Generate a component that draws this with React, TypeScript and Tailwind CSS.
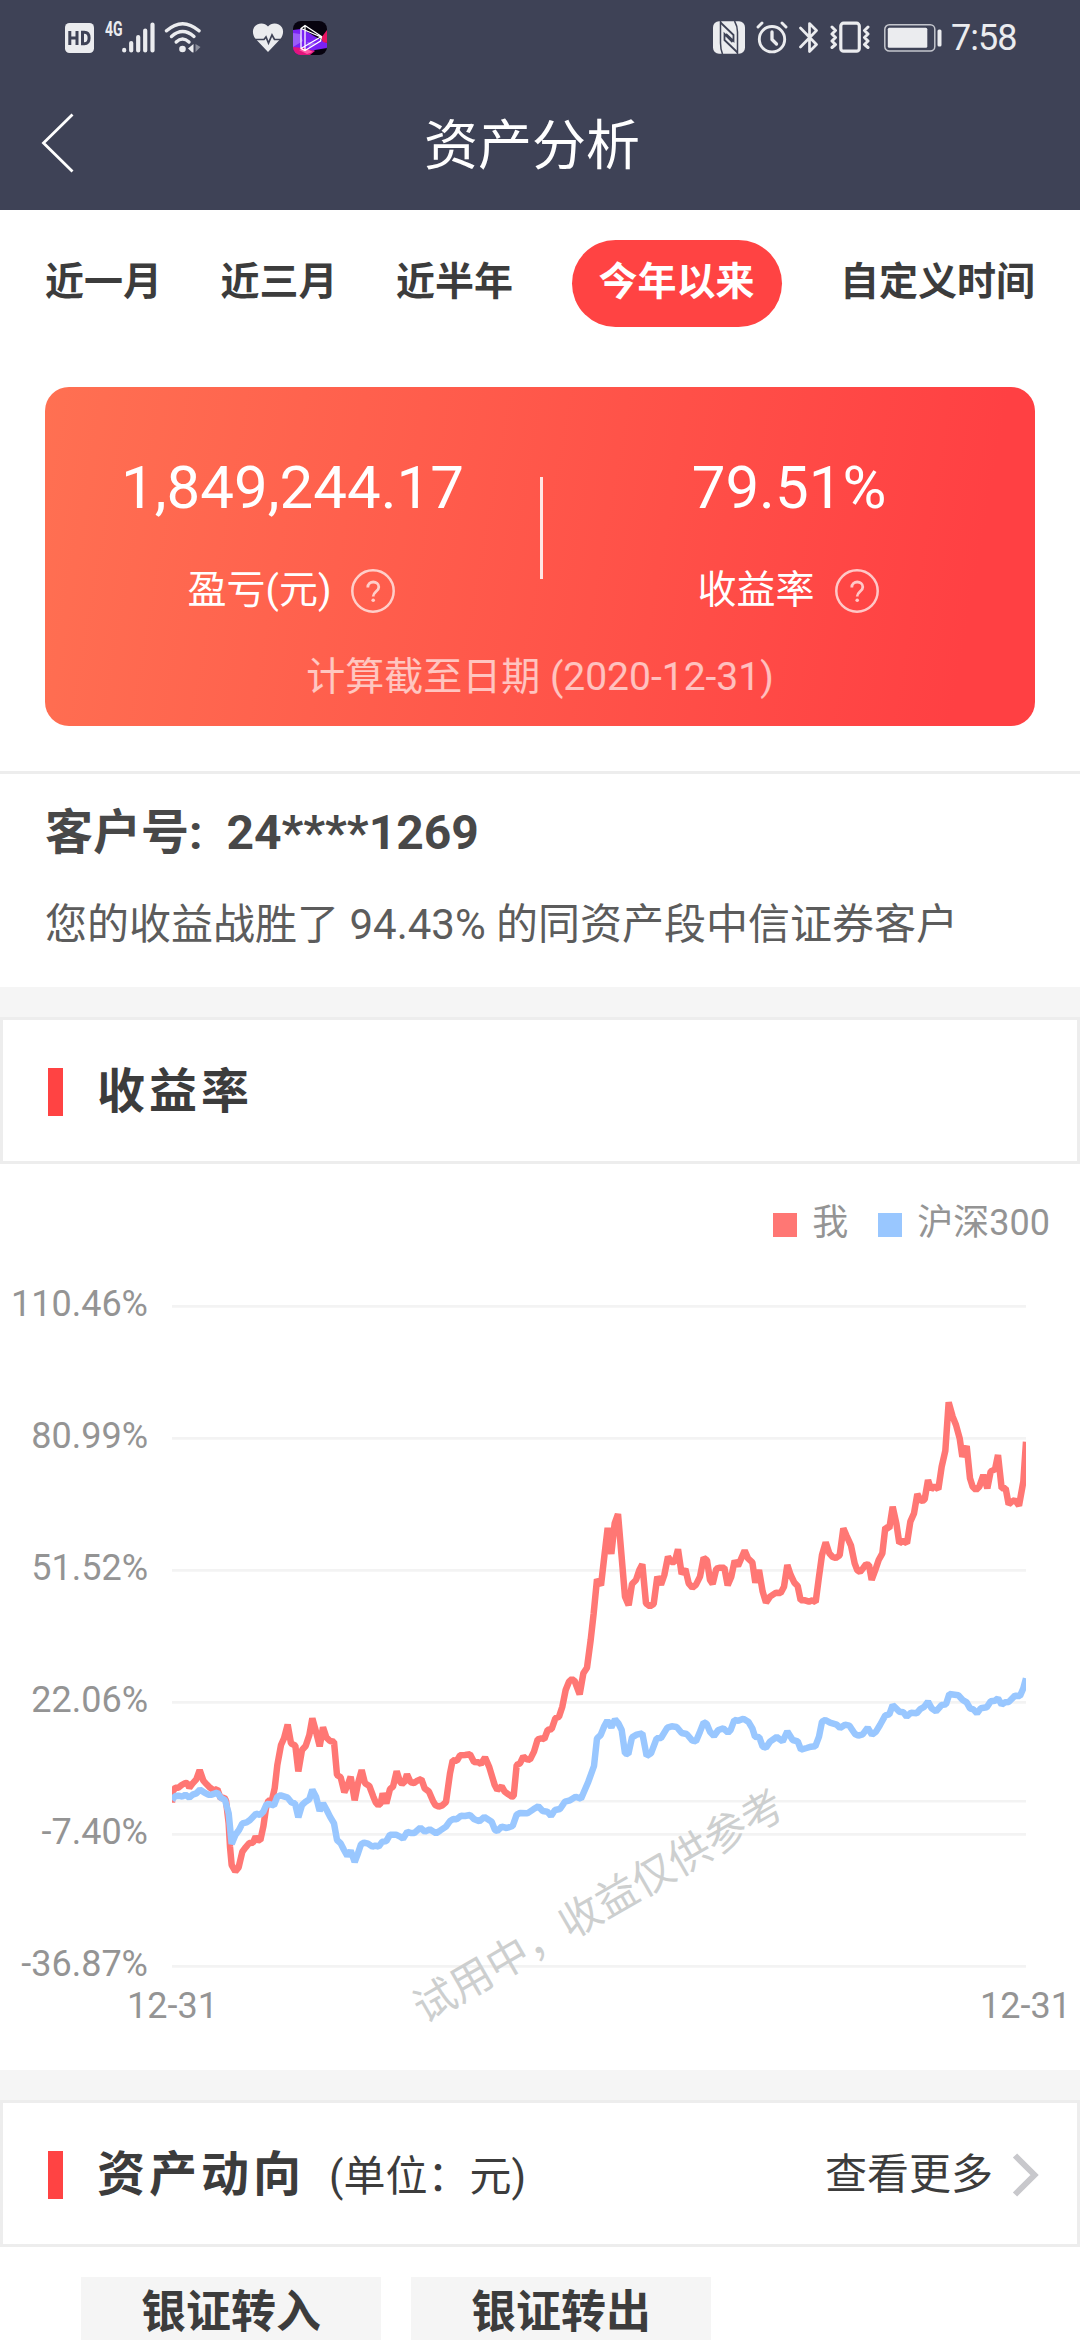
import React from "react";

const ink = "#ebecef";

function StatusLeft() {
  return (
    <div className="flex items-start">
      <svg width="29" height="30" viewBox="0 0 29 30" className="mt-[23px]">
        <rect width="29" height="30" rx="4.5" fill={ink} />
        <path d="M4.800 8v14M12 8v14M4.800 15h7M17.500 9.300v11.400h1.800c3 0 4.800-1.900 4.800-5.700s-1.800-5.700-4.800-5.700z" fill="none" stroke="#3e4256" strokeWidth="3" />
      </svg>
      <span className="ml-[11px] mt-[19px] h-[20px] w-[17px] origin-left scale-x-[0.7] text-[20px] leading-[20px] font-bold text-[#ebecef]">4G</span>
      <svg width="33" height="32" viewBox="0 0 33 32" className="mt-[21.500px]">
        <g stroke={ink} strokeWidth="4.2" strokeLinecap="round">
          <path d="M2.200 27.900v.6M9.200 21v7.500M16.200 15v13.500M23.200 8.500v20M30.500 2.500v26" />
        </g>
      </svg>
      <svg width="40" height="33" viewBox="0 0 40 33" className="ml-[9px] mt-[21px]">
        <g fill="none" stroke={ink} strokeWidth="3.400" strokeLinecap="round">
          <path d="M2.500 9.800Q18.500-4.500 35 9.800" />
          <path d="M7.500 15.500Q18.500 5.500 30 15.500" />
          <path d="M12.200 21Q18.500 15 25 21" />
        </g>
        <circle cx="18.500" cy="28" r="3.300" fill={ink} />
        <path d="M29.500 23v8.500l-1.500-.2-4-3.800z" fill={ink} />
        <path d="M31.500 23v8l5-5z" fill="#8b8e9b" />
      </svg>
      <svg width="32" height="30" viewBox="0 0 32 30" className="ml-[48px] mt-[23px]">
        <path d="M16 3.500C12.500-.8 5-.4 2 4.600c-2 3.500-1 7.800 1.200 11L16 29l12.800-13.400C31 12.400 32 8.100 30 4.600 27-.4 19.500-.8 16 3.500z" fill={ink} />
        <path d="M1 16.500h11l2-2.500 2.500 6 3.500-8 2.500 4.500H31" fill="none" stroke="#3e4256" strokeWidth="1.700" />
      </svg>
      <svg width="34" height="34" viewBox="0 0 34 34" className="ml-[9px] mt-[21px]">
        <defs>
          <clipPath id="app-shape">
            <rect width="34" height="34" rx="8" />
          </clipPath>
        </defs>
        <g clipPath="url(#app-shape)">
          <rect width="34" height="34" fill="#07030f" />
          <path d="M0 9l8-1 5 2 8 5 13 7v5l-12 2-8 5H0z" fill="#7a22f5" />
          <path d="M0 12l7 1 3 7-10 6zM14 21l9 1-7 4z" fill="#9b5cf8" />
          <path d="M28 17l6-8v13l-4-1z" fill="#e81462" />
          <path d="M0 26l10 1 12 3-5 4H0z" fill="#e3157c" />
          <path d="M6 29l8-1 6 3-6 2z" fill="#ff5aa8" />
          <path d="M8 7.500l4-3 16.500 11-1 4.500L12 29.500l-4-2zM12 4.500v25M8 7.500l20 8.500M8 27.500l20.500-12" fill="none" stroke="#fff" strokeWidth="1.300" />
        </g>
      </svg>
    </div>
  );
}

function StatusRight() {
  return (
    <div className="flex items-start">
      <svg width="32" height="33" viewBox="0 0 32 33" className="mt-[21px]">
        <rect width="32" height="32.500" rx="6" fill={ink} y=".3" />
        <path d="M7.500 0v22q0 6 2 11M24.500 33V11q0-6-3-11" fill="none" stroke="#3e4256" strokeWidth="1.500" />
        <path d="M7.500 1.500L20.500 14v6l-7.500-7M24.500 31.500L11.500 19v-6l8 8" fill="none" stroke="#3e4256" strokeWidth="1.800" />
      </svg>
      <svg width="32" height="33" viewBox="0 0 32 33" className="ml-[10.500px] mt-[21px]">
        <g fill="none" stroke={ink} strokeWidth="2.900" strokeLinecap="round" strokeLinejoin="round">
          <circle cx="16" cy="18.200" r="12.700" />
          <path d="M16 11v7.500l4.500 4.500" strokeWidth="3.300" />
          <path d="M2 6l4-4M26 2l4 4" />
        </g>
      </svg>
      <svg width="20" height="33" viewBox="0 0 20 33" className="ml-[11px] mt-[21px]">
        <path d="M1.500 7l16 16.500-7 7V2.500l7 7-16 16.500" fill="none" stroke={ink} strokeWidth="2.700" strokeLinecap="round" strokeLinejoin="round" />
      </svg>
      <svg width="40" height="33" viewBox="0 0 40 33" className="ml-[11px] mt-[21px]">
        <rect x="10.800" y="2.200" width="18.500" height="28" rx="2.800" fill="none" stroke={ink} strokeWidth="3.200" />
        <path d="M2 6l3.500 3.500L2 13l3.500 3.500L2 20l3.500 3.500L2 26.500M38 6l-3.500 3.500L38 13l-3.500 3.500L38 20l-3.500 3.500L38 26.500" fill="none" stroke={ink} strokeWidth="3" strokeLinecap="round" strokeLinejoin="round" />
      </svg>
      <svg width="58" height="28" viewBox="0 0 58 28" className="ml-[14.500px] mt-[24px]">
        <rect x=".8" y=".8" width="50" height="26.200" rx="4.500" fill="none" stroke="#c4c6cd" strokeWidth="1.500" />
        <rect x="3.800" y="3.800" width="39.500" height="20" rx="1.500" fill={ink} />
        <rect x="53.500" y="5.500" width="4" height="17" rx="1.500" fill={ink} />
      </svg>
      <span className="ml-[9px] mt-[18px] w-[66px] text-[36px] leading-[40px] tracking-[-1px] whitespace-nowrap text-[#ebecef]">7:58</span>
    </div>
  );
}

function Help() {
  return (
    <svg width="44" height="44" viewBox="0 0 44 44" className="mt-[2px] shrink-0 opacity-70">
      <circle cx="22" cy="22" r="20.700" fill="none" stroke="#fff" strokeWidth="2.500" />
      <path d="M16.800 18.500c0-7.500 11-7 11-.6 0 4.600-5.600 4.600-5.600 9.600" fill="none" stroke="#fff" strokeWidth="2.800" />
      <circle cx="22.200" cy="31.200" r="1.800" fill="#fff" />
    </svg>
  );
}

type Chunk = { dx: number; dy: number; pts: string };

// Chart points are kept in thirds of a pixel; every chunk carries its own origin.
const mine: Chunk[] = [
  { dx: 0, dy: 0, pts: "96,458 98,425 106,413 115,413 125,405 136,399 142,400 148,413 158,400 169,388 179,360 190,392 200,403 210,413 222,422 232,417 242,445 253,443 258,452 266,520 270,590 275,645 286,664 296,652 307,605 317,592 328,579 339,578 347,560 354,570 361,571 370,530 378,475 385,452 396,450 404,415 412,345 423,285 432,265 443,224 453,280 466,287 475,364 486,300 497,288 508,255 517,205 528,245 539,289 549,232 559,262 570,273 582,275 591,375 602,382 613,427 623,405 632,380 644,451 654,400 665,360 675,400 688,408 700,440 707,457 715,466 722,460 728,430 739,460 750,417 759,410 770,364 780,395 786,402 794,395 801,373 812,397 822,399 832,392 844,387 854,415 867,425 880,455 886,465 896,470 907,466 918,456 930,370 938,331 951,332 960,316" },
  { dx: 960, dy: -510, pts: "15,825 30,823 42,846 55,847 63,852 75,832 88,862 104,915 112,930 125,919 134,935 145,943 156,950 161,948 170,855 180,850 190,829 200,838 210,839 222,815 233,778 244,775 253,777 263,750 275,747 286,715 297,710 307,680 317,630 327,605 336,597 344,603 359,643 370,580 381,563 392,480 401,400 411,298 423,316 434,220 443,144 454,222 464,130 474,102 484,220 495,350 506,376 516,312 528,300 538,270 547,253 558,370 570,379 581,372 592,290 603,314 613,285 624,230 634,246 644,246 654,208 665,282 676,267 686,310 697,323 708,314 720,290 731,233 741,241 750,300 758,312 769,266 780,263 793,263 803,316 814,290 824,242 834,258 844,235 854,212 864,235 877,247 886,308 897,270 908,335 918,368" },
  { dx: 1800, dy: -810, pts: "90,650 108,638 122,639 132,620 142,555 152,585 163,608 173,618 182,661 195,661 207,665 217,661 227,666 237,590 246,525 257,487 268,520 278,531 287,534 299,526 310,445 320,468 333,497 344,550 352,571 360,576 368,566 378,553 387,555 395,600 406,570 416,540 427,520 436,442 448,445 458,380 469,430 478,490 489,482 501,490 511,425 522,400 532,342 541,360 548,363 554,358 564,300 573,328 583,318 595,328 605,260 616,212 626,67 638,110 648,135 659,175 667,230 680,198 690,295 698,320 708,330 718,320 730,285 742,325 752,274 765,268 774,225 785,325 797,325 806,373 814,366 824,360 832,370 837,377 850,305 858,185" },
];

const index300: Chunk[] = [
  { dx: 0, dy: 0, pts: "96,450 106,438 115,437 127,440 136,434 148,443 158,434 169,430 180,419 192,427 205,434 215,434 232,428 242,443 255,450 266,490 275,582 286,555 297,540 307,520 320,517 330,510 348,491 360,495 370,485 380,462 390,463 402,466 412,440 422,436 443,443 455,458 465,460 475,502 486,465 497,455 508,448 517,419 528,440 539,483 549,460 560,480 570,500 582,520 591,570 602,580 612,600 622,618 632,602 644,636 654,610 663,583 672,578 684,581 697,590 706,587 716,590 727,575 739,573 750,554 768,554 780,560 789,566 802,545 812,549 823,549 841,533 855,545 869,538 888,550 900,542 918,530 930,513 940,507 950,508 963,497 975,498 990,495 1003,508 1018,514" },
  { dx: 900, dy: 270, pts: "133,231 155,245 165,270 172,273 185,260 200,264 218,258 230,224 240,219 262,220 280,208 295,199 308,213 322,215 333,228 345,210 360,207 375,185 390,181 407,170 423,176 445,125" },
  { dx: 960, dy: -510, pts: "402,858 411,775 422,765 433,738 442,722 454,742 465,718 475,730 485,750 495,820 505,822 516,772 530,764 547,760 560,828 573,820 590,775 603,774 622,743 635,739 650,741 665,759 680,762 697,782 708,784 720,755 731,727 740,731 750,755 762,768 775,750 790,745 804,758 812,750 823,720 835,722 850,716 865,725 877,745 885,770 898,772 908,800 918,803 930,785 950,771" },
  { dx: 1800, dy: -810, pts: "128,1084 142,1054 158,1080 173,1084 183,1109 200,1104 213,1100 226,1099 237,1070 246,1025 256,1020 270,1028 290,1034 300,1044 315,1034 328,1037 345,1062 355,1067 368,1063 383,1043 396,1064 408,1055 420,1035 436,1006 448,1003 458,975 478,995 490,997 500,1010 513,998 530,1000 540,988 553,980 564,965 575,985 588,994 605,975 618,973 628,942 655,946 668,960 680,967 690,985 700,988 711,1000 722,985 740,982 752,964 765,962 774,955 785,974 795,967 806,966 825,947 840,948 850,925 858,895" },
];

function toPoints(chunks: Chunk[]) {
  return chunks
    .flatMap((c) =>
      c.pts.split(" ").map((p) => {
        const [x, y] = p.split(",").map(Number);
        return `${((x + c.dx - 96) / 3).toFixed(2)},${((y + c.dy) / 3 + 354).toFixed(2)}`;
      }),
    )
    .join(" ");
}

const yLabels = ["110.46%", "80.99%", "51.52%", "22.06%", "-7.40%", "-36.87%"];
const gridY = [10.4, 142.4, 274.4, 406.4, 505.3, 538.4, 670.4];

function Chart() {
  return (
    <section className="relative h-[906px]">
      <div className="flex h-[132px] items-center justify-end pt-[-12px] pr-[30px] pb-[14px] text-[36px] leading-[40px] text-[#949494]">
        <span className="mt-[3px] h-6 w-6 bg-[#ff7774]" />
        <span className="ml-[15px]">我</span>
        <span className="mt-[3px] ml-[30px] h-6 w-6 bg-[#99c7ff]" />
        <span className="ml-[15px]">沪深300</span>
      </div>
      <div className="flex h-[680px]">
        <div className="flex w-[148px] flex-col items-end text-[36px] text-[#949494]">
          {yLabels.map((l) => (
            <div key={l} className="-mt-[12px] mb-[104px] h-10 shrink-0 leading-10">
              {l}
            </div>
          ))}
        </div>
        <svg width="854" height="680" viewBox="0 0 854 680" className="ml-[24px]">
          {gridY.map((y) => (
            <path key={y} d={`M0 ${y}H854`} stroke="#f3f3f3" strokeWidth="2.600" />
          ))}
          <polyline points={toPoints(mine)} fill="none" stroke="#ff7774" strokeWidth="6.500" strokeLinejoin="bevel" />
          <polyline points={toPoints(index300)} fill="none" stroke="#99c7ff" strokeWidth="6.500" strokeLinejoin="bevel" />
        </svg>
      </div>
      <div className="flex justify-between pt-[10px] pr-[9px] pl-[127px] text-[36px] leading-[40px] text-[#949494]">
        <span>12-31</span>
        <span>12-31</span>
      </div>
      <div className="absolute top-[722px] left-[389px] w-[420px] -rotate-30 text-center text-[42px] leading-[42px] whitespace-nowrap text-[#cdcfcf]">
        试用中，收益仅供参考
      </div>
    </section>
  );
}

export default function App() {
  return (
    <div className="flex h-[2340px] w-[1080px] flex-col overflow-hidden bg-white font-['Roboto','Noto_Sans_CJK_SC',sans-serif]" lang="zh-CN">
      <header className="h-[210px] shrink-0 bg-[#3e4256]">
        <div className="flex h-[75px] justify-between pr-[63px] pl-[65px]">
          <StatusLeft />
          <StatusRight />
        </div>
        <div className="flex h-[135px] items-start">
          <svg width="36" height="62" viewBox="0 0 36 62" className="mt-[37px] ml-[40px] shrink-0">
            <path d="M32.500 2.500L3.500 31l29 28.500" fill="none" stroke="#fff" strokeWidth="2.800" />
          </svg>
          <h1 className="mt-[42px] ml-[348px] text-[54px] leading-[60px] text-white">资产分析</h1>
        </div>
      </header>

      <nav className="flex h-[177px] shrink-0 items-start justify-between px-[45px] text-[39px] leading-[87px] font-bold text-[#3c3c3c]">
        <span className="mt-[29px]">近一月</span>
        <span className="mt-[29px]">近三月</span>
        <span className="mt-[29px]">近半年</span>
        <span className="mt-[30px] h-[87px] w-[210px] rounded-full bg-[#ff4343] text-center leading-[85px] text-white">今年以来</span>
        <span className="mt-[29px]">自定义时间</span>
      </nav>

      <section className="mx-[45px] h-[339px] shrink-0 rounded-[24px] bg-[linear-gradient(100deg,#ff7052_0%,#ff4043_92%)] text-white">
        <div className="flex h-[240px]">
          <div className="flex w-[495px] flex-col items-center">
            <div className="mt-[65px] text-[60px] leading-[72px]">1,849,244.17</div>
            <div className="mt-[43px] flex items-center gap-[20px] pr-[2px] text-[39px] leading-[46px]">
              <span>盈亏(元)</span>
              <Help />
            </div>
          </div>
          <div className="mt-[90px] h-[102px] w-[3px] bg-white/85" />
          <div className="flex w-[492px] flex-col items-center">
            <div className="mt-[65px] text-[60px] leading-[72px]">79.51%</div>
            <div className="mt-[43px] flex items-center gap-[20px] pr-[2px] text-[39px] leading-[46px]">
              <span>收益率</span>
              <Help />
            </div>
          </div>
        </div>
        <div className="pt-[27px] text-center text-[39px] leading-[46px] text-white/65">计算截至日期 (2020-12-31)</div>
      </section>

      <section className="mt-[45px] h-[216px] shrink-0 border-t-[3px] border-[#ededed] pl-[45px]">
        <div className="mt-[31px] text-[48px] leading-[56px] font-bold whitespace-pre text-[#484848]">客户号:  24****1269</div>
        <div className="mt-[39px] text-[42px] leading-[50px] text-[#5c5c5c]">您的收益战胜了 94.43% 的同资产段中信证券客户</div>
      </section>

      <div className="h-[30px] shrink-0 bg-[#f5f5f5]" />
      <section className="flex h-[147px] shrink-0 items-center border-[3px] border-[#ededed] pt-[3px] pl-[45px]">
        <span className="h-12 w-[15px] bg-[#ff4343]" />
        <h2 className="ml-[34px] text-[48px] leading-[56px] font-bold tracking-[4px] text-[#3c3c3c]">收益率</h2>
      </section>

      <Chart />

      <div className="h-[30px] shrink-0 bg-[#f5f5f5]" />
      <section className="flex h-[147px] shrink-0 items-center border-[3px] border-[#ededed] pt-[3px] pr-[38px] pl-[45px] text-[42px] text-[#3c3c3c]">
        <span className="h-12 w-[15px] bg-[#ff4343]" />
        <h2 className="ml-[34px] text-[48px] leading-[56px] font-bold tracking-[4px]">资产动向</h2>
        <span className="mt-[4px] ml-[24px] leading-[50px]">(单位：元)</span>
        <span className="ml-auto leading-[50px]">查看更多</span>
        <svg width="27" height="44" viewBox="0 0 27 44" className="ml-[19px]">
          <path d="M3 2.500L22.500 22 3 41.500" fill="none" stroke="#c8c8cc" strokeWidth="6" />
        </svg>
      </section>

      <div className="mt-[30px] flex h-[63px] shrink-0 gap-[30px] overflow-hidden pl-[81px] text-center text-[45px] leading-[72px] font-bold text-[#3c3c3c]">
        <div className="w-[300px] bg-[#f5f5f5]">银证转入</div>
        <div className="w-[300px] bg-[#f5f5f5]">银证转出</div>
      </div>
    </div>
  );
}
